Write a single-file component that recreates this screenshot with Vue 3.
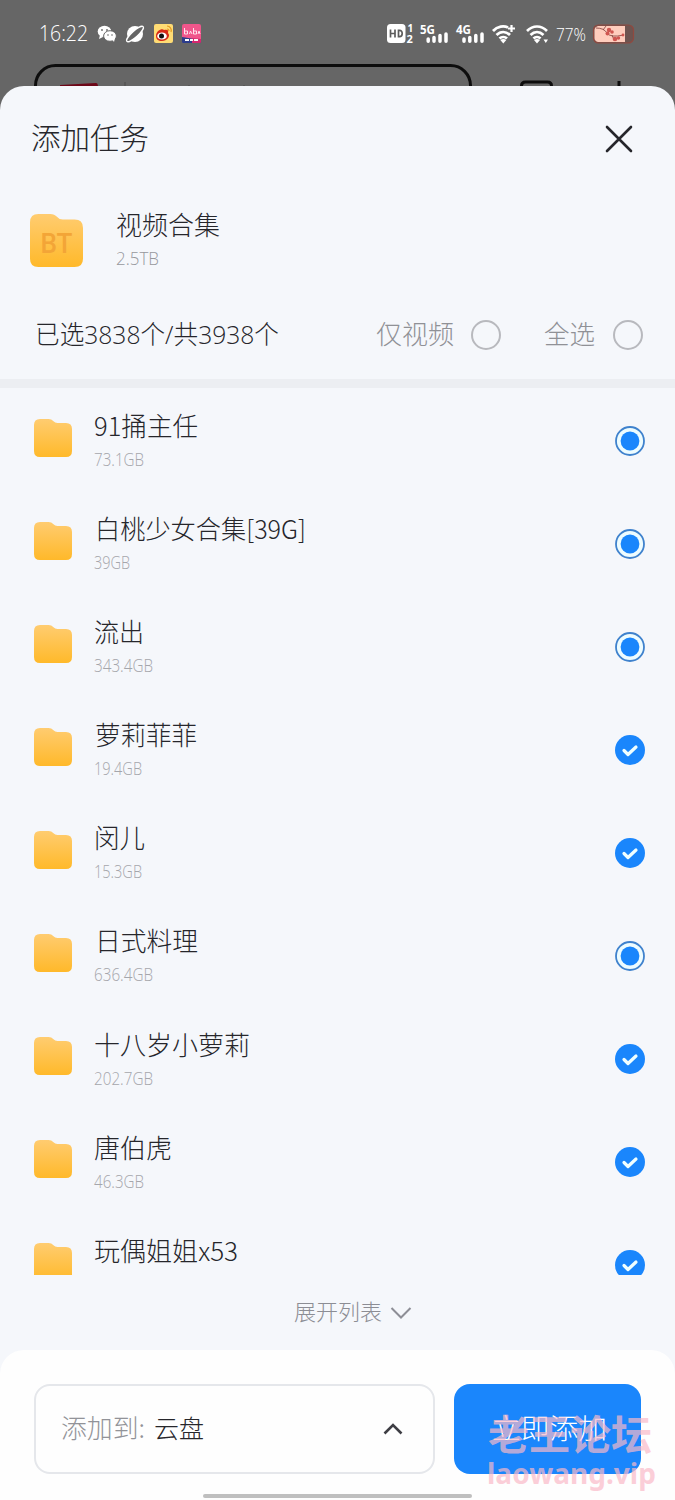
<script setup>
const rows = [
  { name: '91捅主任', size: '73.1GB', w: 104, sw: 50, x: 0, checked: false },
  { name: '白桃少女合集[39G]', size: '39GB', w: 211, sw: 36, x: 1, checked: false },
  { name: '流出', size: '343.4GB', w: 50, sw: 59, x: 0, checked: false },
  { name: '萝莉菲菲', size: '19.4GB', w: 102, sw: 48, x: 1, checked: true },
  { name: '闵儿', size: '15.3GB', w: 51, sw: 48, x: 0, checked: true },
  { name: '日式料理', size: '636.4GB', w: 103, sw: 59, x: 1, checked: false },
  { name: '十八岁小萝莉', size: '202.7GB', w: 156, sw: 59, x: 0, checked: true },
  { name: '唐伯虎', size: '46.3GB', w: 78, sw: 50, x: 0, checked: true },
  { name: '玩偶姐姐x53', size: '', w: 144, sw: 0, x: 0, checked: true },
]
</script>

<template>
  <div class="screen">
    <header class="status">
      <svg width="675" height="87" viewBox="0 0 675 87">
        <text class="thin" x="39" y="40.500" font-size="21.500" textLength="49" lengthAdjust="spacingAndGlyphs" fill="#fff">16:22</text>
        <g fill="#fff">
          <ellipse cx="104.500" cy="31.500" rx="6.800" ry="5.800" />
          <path d="M100 35l-1 4 4-2z" />
          <ellipse cx="110" cy="36" rx="6.400" ry="5.300" stroke="#666" stroke-width="1" />
          <path d="M112 39l2 3 1-4z" />
          <g fill="#666">
            <circle cx="102" cy="30" r=".9" /><circle cx="107" cy="30" r=".9" />
            <circle cx="108" cy="35" r=".8" /><circle cx="112" cy="35" r=".8" />
          </g>
        </g>
        <circle cx="135" cy="34" r="8" fill="#fff" />
        <ellipse cx="135" cy="34" rx="11" ry="3" transform="rotate(-42 135 34)" fill="#666" stroke="#fff" stroke-width="1.300" />
        <rect x="154" y="24" width="19" height="19" rx="2" fill="#ffdc74" />
        <path d="M156 36c0-5 6-8 8-6 3-1 5 0 4 3 3 3-1 8-6 8-4 0-6-2-6-5z" fill="#d72a16" />
        <ellipse cx="162" cy="36" rx="4.800" ry="3.600" fill="#fff" />
        <circle cx="161.500" cy="36" r="2.500" fill="#111" />
        <path d="M167 26c3 0 5 3 4 6M167 29c1.500 0 2 1 2 2" stroke="#e59a20" stroke-width="1.200" fill="none" />
        <rect x="182" y="24" width="19" height="19" rx="2" fill="#f0568b" />
        <path d="M182 37l19 3v2q0 1-1 1h-17q-1 0-1-1z" fill="#2b3c8c" />
        <path d="M192 38l9 1v3q0 1-1 1h-8z" fill="#d5286e" />
        <path d="M184.500 28v6h3v-3h-3M189.500 34l1-3 1.500 3M193.500 28v6h3v-3h-3M198 34l1-3 1 3" stroke="#ffe1ec" stroke-width="1" fill="none" />
        <path d="M185 40h4m1 0h3m1 0h4" stroke="#fff" stroke-width="2" />

        <rect x="387" y="24" width="18.500" height="19" rx="3.500" fill="#fff" />
        <path d="M390.500 29.500v8M395 29.500v8M390.500 33.500h4.500M398.500 30.300v6.400h1c3.600 0 3.600-6.400 0-6.400z" fill="none" stroke="#5c5c5c" stroke-width="1.700" />
        <g fill="#fff">
          <text class="bold" x="407.500" y="31.500" font-size="10">1</text>
          <text class="bold" x="406.500" y="43" font-size="11">2</text>
          <text class="bold" x="420" y="33.500" font-size="12.500" textLength="15" lengthAdjust="spacingAndGlyphs">5G</text>
          <text class="bold" x="456" y="33.500" font-size="12.500" textLength="15" lengthAdjust="spacingAndGlyphs">4G</text>
        </g>
        <path d="M428.200 39v2.200M434 37.500v3.700M440 35.500v5.700M446 34v7.200M464 39v2.200M469.800 37.500v3.700M475.800 35.500v5.700M482 34v7.200" stroke="#fff" stroke-width="3.500" stroke-linecap="round" />
        <g fill="none" stroke="#fff" stroke-width="2.700">
          <path d="M493 31c4.500-5 11-5.500 15-3.500M496.500 35c4-4 9.500-4 13.500 0M499.500 38.500c2-2 5.500-2 7.500 0" />
          <path d="M511.500 25v7M508 28.500h7" stroke-width="2.200" />
          <path d="M527 31c6-6 14-6 20 0M530.500 35c4-4 9-4 13 0M533.500 38.500c2-2 5-2 7 0" />
        </g>
        <path d="M500.300 40l3 3.500 3-3.500q-3-2-6 0zM534 40l3 3.500 3-3.500q-3-2-6 0zM543.500 39.500h4.500l-2.200 3.500z" fill="#fff" />
        <text class="thin" x="556" y="40.500" font-size="18.500" textLength="30" lengthAdjust="spacingAndGlyphs" fill="#fff">77%</text>
        <rect x="593.500" y="25" width="40" height="18" rx="5" fill="#6e5450" stroke="#90493f" stroke-width="1.200" />
        <path d="M598 26h27v16h-27q-3.500-1-3.500-4v-8q0-3 3.500-4z" fill="#ffcdbd" />
        <path d="M596 28q8 0 11 5t17 2M603 30l3-4M612 35l2 5" stroke="#7d3c38" stroke-width=".8" fill="none" />
        <g fill="#cf5650"><circle cx="609" cy="30" r="2.200" /><circle cx="607.500" cy="33.500" r="2" /><circle cx="612" cy="32" r="1.800" /><circle cx="615" cy="39" r="2.300" /><circle cx="618.500" cy="38" r="1.700" /><circle cx="623" cy="35" r="1.400" /></g>

        <rect x="35.500" y="65.500" width="435" height="50" rx="20" fill="none" stroke="#0d0d0d" stroke-width="3" />
        <path d="M60 85l36-2q2 0 2 4H60z" fill="#6d0718" />
        <path d="M125 82v4M189 85v1M244 85v1" stroke="#4a4a4a" stroke-width="1" />
        <path d="M521.500 87v-1q0-4 4-4h22q4 0 4 4v1" fill="none" stroke="#0d0d0d" stroke-width="3" />
        <path d="M619 81v6" stroke="#0d0d0d" stroke-width="3" />
      </svg>
    </header>

    <main class="sheet">
      <div class="titlebar">
        <svg class="label" width="120" height="40"><text x="0" y="30" font-size="29.500" textLength="118" lengthAdjust="spacingAndGlyphs" fill="#26262b">添加任务</text></svg>
        <svg class="close" width="28" height="28" viewBox="0 0 28 28"><path d="M2 2l24 24M26 2L2 26" stroke="#26262b" stroke-width="2.600" stroke-linecap="round" /></svg>
      </div>

      <div class="bundle">
        <svg width="53" height="53" viewBox="0 0 38 38">
          <defs>
            <linearGradient id="folder" x1="0" y1="0" x2="0" y2="1">
              <stop offset="0" stop-color="#ffcc70" /><stop offset="1" stop-color="#ffb92a" />
            </linearGradient>
          </defs>
          <path d="M0 6Q0 0 6 0h8.500q3 0 5 2.200Q21 4 23.500 4H32q6 0 6 6v22q0 6-6 6H6q-6 0-6-6z" fill="url(#folder)" />
          <text class="bt" x="7.500" y="28" font-size="19.500" textLength="23" lengthAdjust="spacingAndGlyphs" fill="#f3a537">BT</text>
        </svg>
        <div class="bundle-text">
          <svg width="106" height="36"><text x="0" y="27" font-size="26" textLength="104" lengthAdjust="spacingAndGlyphs" fill="#26262b">视频合集</text></svg>
          <svg width="60" height="24"><text class="thin" x="0" y="21" font-size="18" textLength="43" lengthAdjust="spacingAndGlyphs" fill="#97989d">2.5TB</text></svg>
        </div>
      </div>

      <div class="summary">
        <svg class="count" width="246" height="36">
          <text class="mixed" x="0" y="28" font-size="26" textLength="244" lengthAdjust="spacingAndGlyphs" fill="#26262b">已选3838个/共3938个</text>
        </svg>
        <svg class="video" width="78" height="36"><text x="0" y="28" font-size="26" textLength="78" lengthAdjust="spacingAndGlyphs" fill="#909196">仅视频</text></svg>
        <i class="ring" />
        <svg class="all" width="52" height="36"><text x="0" y="28" font-size="26" textLength="51" lengthAdjust="spacingAndGlyphs" fill="#909196">全选</text></svg>
        <i class="ring" />
      </div>

      <div class="list">
        <div v-for="r in rows" :key="r.name" class="row">
          <svg class="folder" width="38" height="38" viewBox="0 0 38 38">
            <path d="M0 6Q0 0 6 0h8.500q3 0 5 2.200Q21 4 23.500 4H32q6 0 6 6v22q0 6-6 6H6q-6 0-6-6z" fill="url(#folder)" />
          </svg>
          <div class="row-text">
            <svg width="240" height="38"><text :x="r.x" y="28" font-size="26" :textLength="r.w" lengthAdjust="spacingAndGlyphs" fill="#26262b">{{ r.name }}</text></svg>
            <svg width="80" height="26"><text v-if="r.size" class="thin" x="0" y="20" font-size="17.500" :textLength="r.sw" lengthAdjust="spacingAndGlyphs" fill="#a5a6ab">{{ r.size }}</text></svg>
          </div>
          <svg class="mark" width="30" height="30" viewBox="0 0 30 30">
            <template v-if="r.checked">
              <circle cx="15" cy="15" r="15" fill="#1a86fc" />
              <path d="M9 15.500l4 4 8-7.500" fill="none" stroke="#f0ffff" stroke-width="3.200" stroke-linecap="round" stroke-linejoin="round" />
            </template>
            <template v-else>
              <circle cx="15" cy="15" r="14" fill="#edfcff" stroke="#3f82cd" stroke-width="1.800" />
              <circle cx="15" cy="15" r="9.400" fill="#1a86fc" />
            </template>
          </svg>
        </div>
      </div>

      <div class="expand">
        <svg width="90" height="34"><text x="0" y="24" font-size="22" textLength="88" lengthAdjust="spacingAndGlyphs" fill="#8c8d94">展开列表</text></svg>
        <svg width="22" height="14" viewBox="0 0 22 14"><path d="M1.500 2L11 11.500 20.500 2" fill="none" stroke="#8d8e96" stroke-width="2" /></svg>
      </div>

      <footer class="footer">
        <div class="target">
          <svg width="150" height="40">
            <text x="0" y="29" font-size="26" textLength="84" lengthAdjust="spacingAndGlyphs" fill="#929398">添加到:</text>
            <text x="93" y="29" font-size="25.500" textLength="50" lengthAdjust="spacingAndGlyphs" fill="#26262b">云盘</text>
          </svg>
          <svg class="up" width="20" height="12" viewBox="0 0 20 12"><path d="M1.500 10.500L10 2l8.500 8.500" fill="none" stroke="#3e3e44" stroke-width="2.600" /></svg>
        </div>
        <div class="submit">
          <svg width="116" height="44"><text x="0" y="32" font-size="28" textLength="115" lengthAdjust="spacingAndGlyphs" fill="#fff">立即添加</text></svg>
        </div>
        <i class="homebar" />
        <svg class="watermark" width="187" height="100">
          <text class="heavy" x="0" y="50" font-size="41" textLength="164" lengthAdjust="spacingAndGlyphs">老王论坛</text>
          <text class="heavy latin" x="-1" y="84" font-size="28" textLength="169" lengthAdjust="spacingAndGlyphs">laowang.vip</text>
        </svg>
      </footer>
    </main>
  </div>
</template>

<style>
body { margin: 0; background: #666; }
</style>

<style scoped>
.screen {
  width: 675px;
  height: 1500px;
  overflow: hidden;
  background: #666;
  display: flex;
  flex-direction: column;
  font-family: "Noto Sans CJK SC", sans-serif;
  font-weight: 300;
}
svg { display: block; flex: none; overflow: visible; }
.thin, .mixed { font-family: "Open Sans", "Noto Sans CJK SC", sans-serif; font-weight: 300; }
.bold { font-family: "Open Sans", sans-serif; font-weight: 700; }
.bt { font-family: Roboto, sans-serif; font-weight: 500; }
.status { height: 86px; overflow: hidden; flex: none; }
.sheet {
  flex: 1;
  display: flex;
  flex-direction: column;
  background: #f5f7fb;
  border-radius: 24px 24px 0 0;
  box-sizing: border-box;
}
.titlebar {
  display: flex;
  align-items: center;
  justify-content: space-between;
  padding: 0 42px 0 31px;
  height: 106px;
  flex: none;
}
.bundle { display: flex; padding: 22px 30px 0; height: 75px; flex: none; }
.bundle-text { margin: -6px 0 0 33px; }
.summary {
  display: flex;
  align-items: center;
  height: 90px;
  padding: 0 32px 0 35px;
  flex: none;
  border-bottom: 9px solid #eceef2;
}
.video { margin-left: auto; }
.ring { width: 30px; height: 30px; box-sizing: border-box; border: 2px solid #b8b9be; border-radius: 50%; margin: 1px 0 0 17px; flex: none; }
.all { margin-left: 43px; }
.list { height: 887px; overflow: hidden; flex: none; }
.row { display: flex; height: 103.100px; padding: 0 30px 0 33.500px; }
.folder { margin-top: 30.500px; }
.row-text { margin: 20px 0 0 22.500px; flex: 1; }
.mark { margin-top: 37.600px; }
.expand { display: flex; align-items: center; justify-content: center; gap: 6px; height: 75px; flex: none; padding-left: 30px; }
.footer {
  position: relative;
  flex: 1;
  display: flex;
  gap: 19px;
  padding: 34px 34px 0;
  background: #fefefe;
  border-radius: 24px 24px 0 0;
}
.target {
  width: 401px;
  height: 90px;
  box-sizing: border-box;
  border: 2px solid #e5e7eb;
  border-radius: 16px;
  display: flex;
  align-items: center;
  justify-content: space-between;
  padding: 0 30px 0 25px;
}
.submit {
  width: 187px;
  height: 90px;
  border-radius: 16px;
  background: #1a86fc;
  display: flex;
  align-items: center;
  justify-content: center;
  padding-left: 4px;
  box-sizing: border-box;
}
.homebar { position: absolute; left: 203px; bottom: 2px; width: 269px; height: 4px; background: #bfbfbf; border-radius: 2px; }
.watermark { position: absolute; left: 488px; top: 50px; fill: rgba(250, 185, 200, .7); }
.heavy { font-weight: 700; }
.latin { font-family: "Noto Sans", sans-serif; }
</style>
